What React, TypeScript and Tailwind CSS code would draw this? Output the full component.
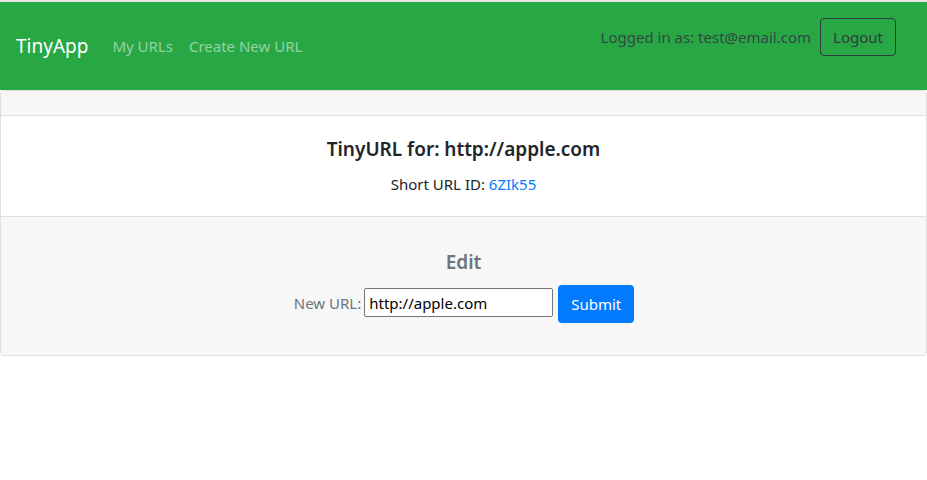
import React from "react";

export default function App() {
  return (
    <div className="min-h-[480px] bg-white text-[#212529]" style={{ fontFamily: '"Noto Sans", "Open Sans", sans-serif' }}>
      <div className="h-[2px] bg-[#e6e6e6]" />
      <nav className="h-[88px] bg-[#28a745] flex items-start pl-4 pr-[31px]">
        <div className="flex items-center h-full">
          <span className="text-[19px] text-white mr-[16px] leading-none">TinyApp</span>
          <span className="px-2 text-[15px] text-white/50">My URLs</span>
          <span className="px-2 text-[15px] text-white/50">Create New URL</span>
        </div>
        <div className="ml-auto flex items-center gap-[9px] mt-4">
          <span className="text-[15px] text-[#343a40]/90">Logged in as: test@email.com</span>
          <button className="h-[38px] w-[76px] border border-[#343a40] rounded text-[15px] text-[#343a40]">Logout</button>
        </div>
      </nav>
      <div className="border border-[#dfdfdf] rounded-[4px] overflow-hidden">
        <div className="h-[25px] bg-[#f7f7f7] border-b border-[#dfdfdf]" />
        <div className="h-[100px] flex flex-col items-center pt-[20px]">
          <h5 className="text-[19px] font-semibold leading-[26px] mb-[10px]">TinyURL for: http://apple.com</h5>
          <p className="text-[15px] leading-[24px]">
            Short URL ID: <a className="text-[#007bff]">6ZIk55</a>
          </p>
        </div>
        <div className="h-[139px] bg-[#f7f7f7] border-t border-[#dfdfdf] flex flex-col items-center pt-[32px]">
          <h4 className="text-[19px] font-semibold text-[#6c757d] leading-[26px] mb-[10px]">Edit</h4>
          <div className="flex items-start pl-[1px]">
            <span className="text-[15px] leading-[22px] text-[#6c757d] mr-[3px] mt-[7px]">New URL:</span>
            <input
              className="w-[189px] h-[29px] mt-[3px] border border-[#767676] rounded-[2px] bg-white px-[4px] text-[15px] text-black outline-none"
              defaultValue="http://apple.com"
            />
            <button className="ml-[5px] h-[38px] w-[76px] bg-[#007bff] text-white rounded-[4px] text-[15px]">Submit</button>
          </div>
        </div>
      </div>
    </div>
  );
}
